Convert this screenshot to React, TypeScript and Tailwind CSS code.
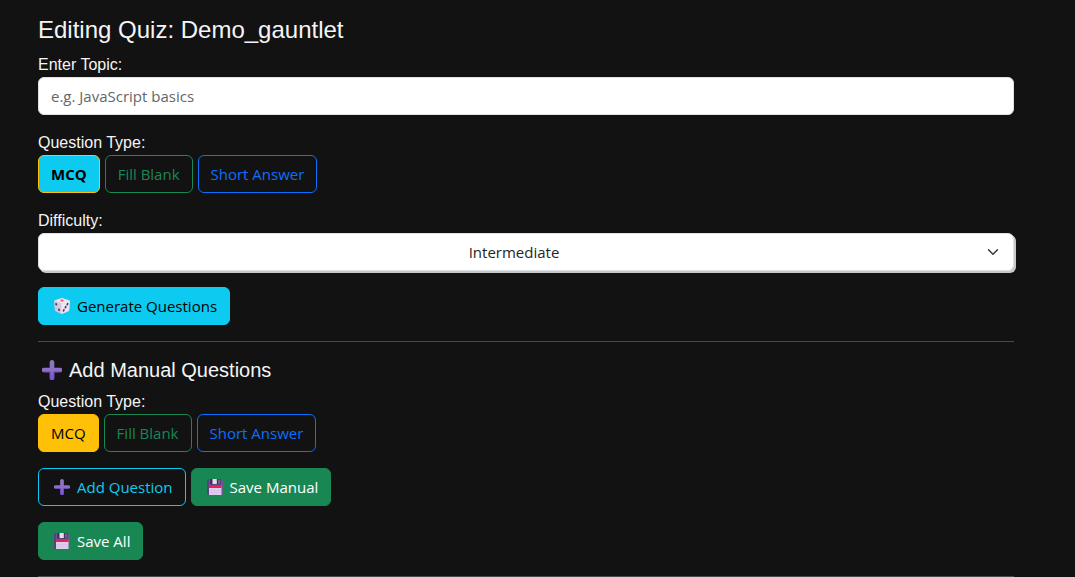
import { useState } from "react";
import type { ButtonHTMLAttributes, ReactNode } from "react";

function PlusIcon({ className }: { className: string }) {
  return (
    <svg viewBox="0 0 20 20" className={className} aria-hidden="true">
      <defs>
        <linearGradient id="plus-fill" x1="0" y1="0" x2="0" y2="1">
          <stop offset="0" stopColor="#8a7ab4" />
          <stop offset="0.5" stopColor="#8b70c6" />
          <stop offset="1" stopColor="#7a50d8" />
        </linearGradient>
      </defs>
      <path
        d="M10 0a2.300 2.300 0 0 1 2.300 2v5.700H18a2.300 2.300 0 0 1 0 4.600h-5.700V18a2.300 2.300 0 0 1-4.600 0v-5.700H2a2.300 2.300 0 0 1 0-4.600h5.700V2A2.300 2.300 0 0 1 10 0z"
        fill="url(#plus-fill)"
      />
      <path d="M1.500 11.900h6.600v6.500M11.900 18.300v-6.400h6.600" fill="none" stroke="#6b48bd" strokeWidth="0.8" />
    </svg>
  );
}

function FloppyIcon() {
  return (
    <svg viewBox="0 0 16 16" className="h-4 w-4" aria-hidden="true">
      <path d="M1 0h13.500L16 1.500V15a1 1 0 0 1-1 1H1a1 1 0 0 1-1-1V1a1 1 0 0 1 1-1z" fill="#6a5795" />
      <path d="M0 1v14l1 1h1V0H1z" fill="#54447b" />
      <path d="M3 0h10.500v5.500H3z" fill="#41325f" />
      <path d="M5.500 0h4.300v5H5.500z" fill="#e4dcea" />
      <path d="M11.300 0.500h1.400v4.300h-1.400z" fill="#8474a3" />
      <path d="M2 7h12.500v9H2z" fill="#dccdea" />
      <path d="M2 7h12.500v2H2z" fill="#e52454" />
      <path d="M2.500 11.500h11.500M2.500 13.500h11.500" stroke="#cdbbe0" strokeWidth="0.5" />
    </svg>
  );
}

function DieIcon() {
  return (
    <svg viewBox="0 0 16 16" className="h-4 w-4" aria-hidden="true">
      <path d="M8 0.500l7.300 2.300L7.500 6 0.700 2.800z" fill="#eee5f0" stroke="#eee5f0" strokeLinejoin="round" />
      <path d="M0.600 3L7.300 6v9.500L1.300 12.600z" fill="#d3c6dd" stroke="#d3c6dd" strokeLinejoin="round" />
      <path d="M15.400 3L7.800 6v9.500l7-2.900z" fill="#eee6f2" stroke="#eee6f2" strokeLinejoin="round" />
      <ellipse cx="8" cy="2.600" rx="1.900" ry="1.100" fill="#ee6978" />
      <g fill="#493367">
        <ellipse cx="2.200" cy="6.300" rx="0.900" ry="1.300" transform="rotate(-15 2.200 6.300)" />
        <ellipse cx="5" cy="11.700" rx="0.900" ry="1.300" transform="rotate(-15 5 11.700)" />
        <ellipse cx="13.500" cy="6.200" rx="0.900" ry="1.400" transform="rotate(25 13.500 6.200)" />
        <ellipse cx="11.600" cy="9.200" rx="0.900" ry="1.400" transform="rotate(25 11.600 9.200)" />
        <ellipse cx="9.700" cy="12.400" rx="0.900" ry="1.400" transform="rotate(25 9.700 12.400)" />
      </g>
    </svg>
  );
}

type ButtonProps = ButtonHTMLAttributes<HTMLButtonElement> & { icon?: ReactNode };

function Button({ icon, className, children, ...rest }: ButtonProps) {
  return (
    <button
      type="button"
      className={`flex h-[38px] cursor-pointer items-center rounded-md border px-3 font-['Open_Sans','Noto_Sans',sans-serif] text-[15px] leading-6 whitespace-nowrap ${className}`}
      {...rest}
    >
      {icon && <span className="mr-1 flex w-[22px] justify-center">{icon}</span>}
      {children}
    </button>
  );
}

const types = [
  { name: "MCQ", outline: "border-[#ffc107] text-[#ffc107]" },
  { name: "Fill Blank", outline: "border-[#198754] text-[#198754]" },
  { name: "Short Answer", outline: "border-[#0d6efd] text-[#0d6efd]" },
];

function TypePicker({ label, active }: { label: string; active: string }) {
  const [selected, setSelected] = useState("MCQ");
  return (
    <div role="group" aria-label={label}>
      <div className="leading-6">{label}</div>
      <div className="flex flex-wrap gap-[5px]">
        {types.map((t) => (
          <Button
            key={t.name}
            aria-pressed={selected === t.name}
            onClick={() => setSelected(t.name)}
            className={selected === t.name ? active : t.outline}
          >
            {t.name}
          </Button>
        ))}
      </div>
    </div>
  );
}

export default function App() {
  return (
    <main className="min-h-screen bg-[#121212] pt-4 pr-[61px] pl-[38px] font-['Liberation_Sans',Arial,sans-serif] text-base text-[#f5f5f5]">
      <h1 className="mb-[9px] text-2xl leading-7">Editing Quiz: Demo_gauntlet</h1>
      <div className="flex flex-col gap-4">
        <div>
          <label htmlFor="topic" className="block leading-6">
            Enter Topic:
          </label>
          <input
            id="topic"
            type="text"
            placeholder="e.g. JavaScript basics"
            className="block h-[38px] w-full rounded-md border border-[#dee2e6] bg-white px-3 font-['Open_Sans','Noto_Sans',sans-serif] text-[15px] text-[#212529] placeholder:text-[#63676b]"
          />
        </div>

        <TypePicker label="Question Type:" active="border-[#ffc107] bg-[#0dcaf0] font-bold text-black" />

        <div>
          <label htmlFor="difficulty" className="block leading-6">
            Difficulty:
          </label>
          <div className="relative">
            <select
              id="difficulty"
              defaultValue="Intermediate"
              className="block h-[38px] w-full appearance-none rounded-md border border-[#dee2e6] bg-white pr-9 pl-3 text-center font-['Open_Sans','Noto_Sans',sans-serif] text-[15px] text-[#212529] shadow-[2px_2px_0_#c6c8ca]"
            >
              <option>Beginner</option>
              <option>Intermediate</option>
              <option>Advanced</option>
            </select>
            <svg
              viewBox="0 0 16 16"
              className="pointer-events-none absolute top-[13px] right-[15px] h-3 w-3"
              fill="none"
              stroke="#343a40"
              strokeWidth="2"
              strokeLinecap="round"
              strokeLinejoin="round"
              aria-hidden="true"
            >
              <path d="m2 5 6 6 6-6" />
            </svg>
          </div>
        </div>

        <div className="flex">
          <Button icon={<DieIcon />} className="border-[#0dcaf0] bg-[#0dcaf0] text-black">
            Generate Questions
          </Button>
        </div>

        <hr className="border-[#4a4a4a]" />

        <section>
          <h2 className="mb-2 flex items-center text-xl leading-6">
            <span className="mr-1 flex w-[27px] justify-center">
              <PlusIcon className="h-5 w-5" />
            </span>
            Add Manual Questions
          </h2>
          <TypePicker label="Question Type:" active="border-[#ffc107] bg-[#ffc107] text-black" />
        </section>

        <div className="flex flex-wrap gap-[5px]">
          <Button icon={<PlusIcon className="h-4 w-4" />} className="border-[#0dcaf0] text-[#0dcaf0]">
            Add Question
          </Button>
          <Button icon={<FloppyIcon />} className="border-[#198754] bg-[#198754] text-white">
            Save Manual
          </Button>
        </div>

        <div className="flex">
          <Button icon={<FloppyIcon />} className="border-[#198754] bg-[#198754] text-white">
            Save All
          </Button>
        </div>

        <hr className="border-[#4a4a4a]" />
      </div>
    </main>
  );
}
